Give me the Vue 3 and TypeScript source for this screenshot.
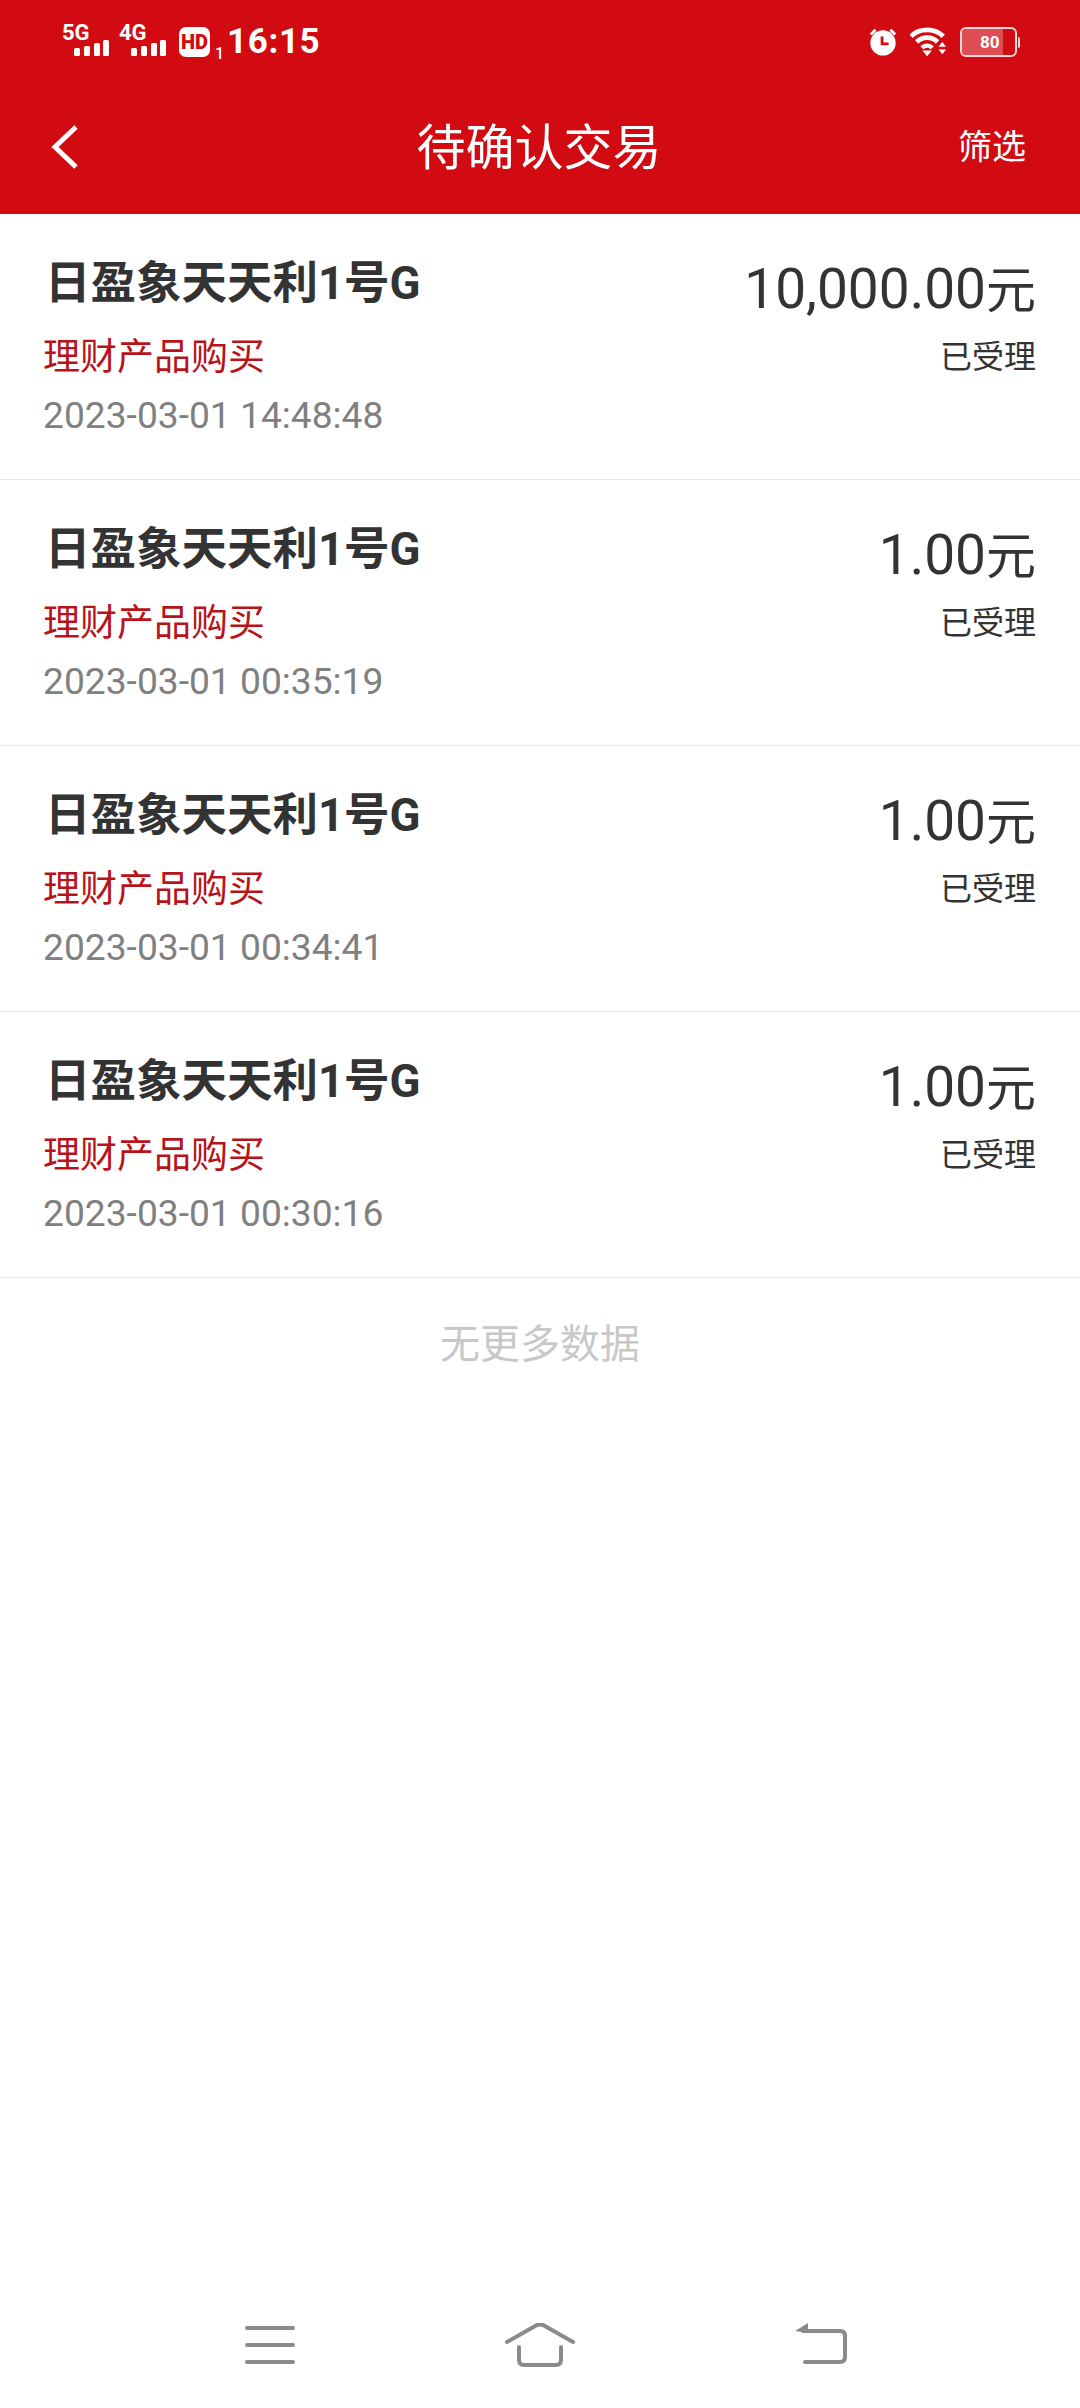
<template>
  <div class="page">
    <header class="top">
      <div class="status-bar">
        <div class="status-left">
          <div class="signal" v-for="s in signals" :key="s">
            <span class="net">{{ s }}</span>
            <svg class="bars" width="36" height="18" viewBox="0 0 36 18">
              <rect x="0" y="9" width="6" height="8" rx="1.5" />
              <rect x="10" y="7" width="6" height="10" rx="1.5" />
              <rect x="20" y="4" width="6" height="13" rx="1.5" />
              <rect x="29" y="1" width="6" height="16" rx="1.5" />
            </svg>
          </div>
          <span class="hd">HD</span>
          <span class="sim">1</span>
          <span class="time">16:15</span>
        </div>
        <div class="status-right">
          <svg width="30" height="30" viewBox="0 0 32 32">
            <circle cx="16" cy="17" r="13.5" fill="#fff" />
            <path d="M3 8l5-5M29 8l-5-5" stroke="#fff" stroke-width="3" fill="none" />
            <path d="M15 10v8h7" stroke="#d20a11" stroke-width="3" fill="none" />
          </svg>
          <svg class="wifi" width="38" height="30" viewBox="0 0 40 30">
            <path d="M1 9C10 0 26 0 35 9" stroke="#fff" stroke-width="5" fill="none" />
            <path d="M7 15c6-6 16-6 22 0" stroke="#fff" stroke-width="5" fill="none" />
            <path d="M12.500 21c3-3 8-3 11 0" stroke="#fff" stroke-width="4.500" fill="none" />
            <path d="M18 30l-5-6h10z" fill="#fff" />
            <path d="M34 15l4 5h-8zM34 28l-4-5h8z" fill="#fff" />
          </svg>
          <div class="battery">
            <div class="battery-box">
              <div class="battery-fill"></div>
              <span class="battery-num">80</span>
            </div>
            <span class="battery-cap"></span>
          </div>
        </div>
      </div>
      <div class="nav">
        <svg class="back" width="30" height="46" viewBox="0 0 30 46">
          <path d="M26 3L5 23l21 20" stroke="#fff" stroke-width="5" fill="none" />
        </svg>
        <h1 class="nav-title">待确认交易</h1>
        <span class="nav-action">筛选</span>
      </div>
    </header>

    <ul class="list">
      <li class="row" v-for="item in trades" :key="item.time">
        <div class="row-left">
          <div class="name">日盈象天天利1号G</div>
          <div class="kind">理财产品购买</div>
          <div class="date">{{ item.time }}</div>
        </div>
        <div class="row-right">
          <div class="amount">{{ item.amount }}<span class="unit">元</span></div>
          <div class="state">已受理</div>
        </div>
      </li>
    </ul>
    <div class="no-more">无更多数据</div>

    <nav class="sys-nav">
      <svg class="sys-menu" width="50" height="38" viewBox="0 0 50 38">
        <path d="M2 2h46M2 19h46M2 36h46" stroke="#8a8a8a" stroke-width="4" stroke-linecap="round" fill="none" />
      </svg>
      <svg width="70" height="44" viewBox="0 0 70 44">
        <path d="M2 19L31 2.500q4-2 8 0L68 19" stroke="#8a8a8a" stroke-width="4" stroke-linecap="round" fill="none" />
        <path d="M14 24v13q0 5 5 5h32q5 0 5-5V24" stroke="#8a8a8a" stroke-width="4" stroke-linecap="round" fill="none" />
      </svg>
      <svg class="sys-back" width="52" height="42" viewBox="0 0 52 42">
        <path d="M0 8L13 0v10z" fill="#8a8a8a" />
        <path d="M8 8h37q5 0 5 5v21q0 5-5 5H10" stroke="#8a8a8a" stroke-width="4" stroke-linecap="round" fill="none" />
      </svg>
    </nav>
  </div>
</template>

<script setup lang="ts">
interface Trade {
  time: string
  amount: string
}

const signals: string[] = ['5G', '4G']

const trades: Trade[] = [
  { time: '2023-03-01 14:48:48', amount: '10,000.00' },
  { time: '2023-03-01 00:35:19', amount: '1.00' },
  { time: '2023-03-01 00:34:41', amount: '1.00' },
  { time: '2023-03-01 00:30:16', amount: '1.00' }
]
</script>

<style>
html,
body {
  margin: 0;
  background: #fff;
}
</style>

<style scoped>
.page {
  width: 1080px;
  height: 2408px;
  display: flex;
  flex-direction: column;
  background: #fff;
  font-family: Roboto, "Noto Sans CJK SC", sans-serif;
}

.top {
  height: 214px;
  background: #d20a11;
  color: #fff;
}

.status-bar {
  height: 84px;
  padding: 0 60px 0 62px;
  display: flex;
  justify-content: space-between;
  align-items: center;
  box-sizing: border-box;
}

.status-left,
.status-right {
  display: flex;
  align-items: center;
}

.status-right {
  gap: 12px;
}

.signal {
  position: relative;
  width: 48px;
  height: 32px;
  margin-right: 10px;
}

.net {
  position: absolute;
  left: 0;
  top: -6px;
  font-size: 22px;
  font-weight: 700;
}

.bars {
  position: absolute;
  right: 0;
  bottom: 1px;
  fill: #fff;
}

.signal:first-child {
  margin-right: 9px;
}

.hd {
  width: 31px;
  height: 30px;
  margin-left: 2px;
  background: #fff;
  border-radius: 7px;
  color: #d20a11;
  font-size: 20px;
  font-weight: 900;
  line-height: 30px;
  text-align: center;
}

.sim {
  align-self: flex-end;
  margin-left: 5px;
  margin-bottom: 1px;
  font-size: 16px;
  font-weight: 500;
  line-height: 14px;
}

.time {
  margin-left: 3px;
  font-size: 35px;
  font-weight: 700;
  letter-spacing: 0.6px;
  line-height: 40px;
}

.battery {
  display: flex;
  align-items: center;
}

.battery-box {
  position: relative;
  width: 57px;
  height: 30px;
  border: 2px solid #f6d9da;
  border-radius: 6px;
  box-sizing: border-box;
  overflow: hidden;
}

.battery-fill {
  width: 41px;
  height: 100%;
  background: #de4d53;
}

.battery-num {
  position: absolute;
  left: 18px;
  top: 0;
  font-size: 17px;
  font-weight: 700;
  line-height: 26px;
}

.battery-cap {
  width: 2px;
  height: 11px;
  margin-left: 1px;
  background: #f6d9da;
  border-radius: 0 2px 2px 0;
}

.nav {
  height: 130px;
  padding: 0 54px 0 50px;
  display: flex;
  align-items: center;
  justify-content: space-between;
  position: relative;
}

.nav-title {
  position: absolute;
  left: 0;
  right: 2px;
  margin: 0;
  top: 37px;
  font-size: 49px;
  font-weight: 400;
  line-height: 56px;
  text-align: center;
  pointer-events: none;
}

.nav-action {
  font-size: 34px;
  line-height: 40px;
  margin-top: -4px;
}

.back {
  margin-top: -4px;
}

.list {
  list-style: none;
  margin: 0;
  padding: 0;
}

.row {
  height: 266px;
  padding: 0 44px 0 43px;
  display: flex;
  justify-content: space-between;
  box-sizing: border-box;
  border-bottom: 1px solid #e6e6e6;
}

.name {
  margin-top: 40px;
  margin-left: 2px;
  font-size: 45.5px;
  font-weight: 700;
  line-height: 60px;
  color: #333;
}

.kind {
  margin-top: 19px;
  font-size: 37px;
  line-height: 50px;
  color: #b9131a;
}

.date {
  margin-top: 8px;
  font-size: 37.2px;
  line-height: 48px;
  color: #808080;
}

.row-right {
  text-align: right;
}

.amount {
  margin-top: 43px;
  font-size: 55px;
  line-height: 64px;
  color: #333;
}

.unit {
  font-size: 50px;
}

.state {
  margin-top: 12px;
  font-size: 32px;
  line-height: 44px;
  color: #333;
}

.no-more {
  margin-top: 39px;
  font-size: 40px;
  line-height: 56px;
  text-align: center;
  color: #c8c8c8;
}

.sys-nav {
  margin-top: auto;
  height: 85px;
  padding-left: 245px;
  display: flex;
  gap: 210px;
  align-items: flex-start;
}

.sys-menu {
  margin-top: 3px;
}

.sys-back {
  margin-left: 10px;
}
</style>
